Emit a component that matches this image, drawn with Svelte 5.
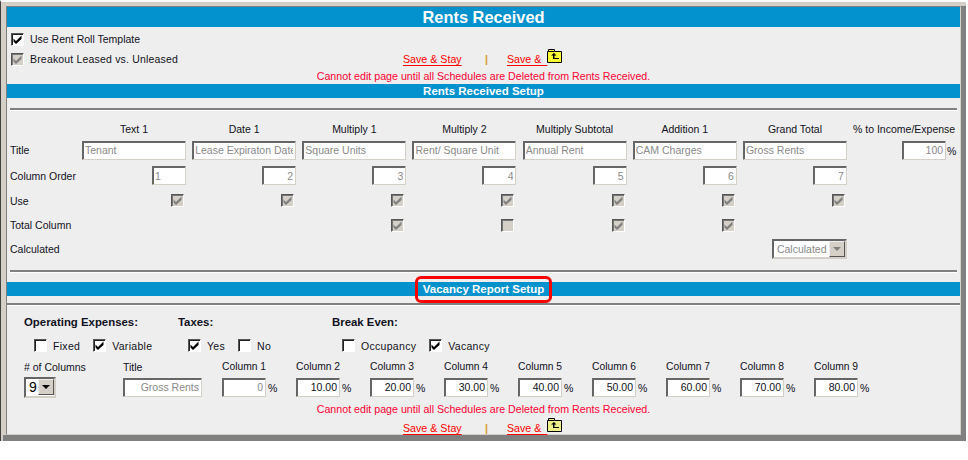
<script>
  const headers = ['Text 1', 'Date 1', 'Multiply 1', 'Multiply 2', 'Multiply Subtotal', 'Addition 1', 'Grand Total'];
  const titles = ['Tenant', 'Lease Expiraton Date', 'Square Units', 'Rent/ Square Unit', 'Annual Rent', 'CAM Charges', 'Gross Rents'];
  const totals = [null, null, true, false, true, true, null];
  const percents = ['10.00', '20.00', '30.00', '40.00', '50.00', '60.00', '70.00', '80.00'];
</script>

{#snippet check(on, disabled = false)}
  <span class="check" class:disabled>
    {#if on}
      <svg viewBox="0 0 9 9" width="9" height="9"><path d="M.5 3.500l2.500 2.500L8.500 .5v3.500L3 9 .5 6.500z" /></svg>
    {/if}
  </span>
{/snippet}

{#snippet folder(pale)}
  <svg class="folder" viewBox="0 0 15 14" width="15" height="14">
    <path d="M.5 13.500v-11h1v-2h6v2h7v11z" fill={pale ? '#eeee88' : '#ffff33'} stroke="#000" />
    <path d="M1 2.500h6" stroke="#000" />
    <path d="M7 4L4 6.500h2V10h6V9H7.500V6.500h2z" fill="#000" />
  </svg>
{/snippet}

{#snippet actions(pale)}
  <a href="#stay" class="stay">Save &amp; Stay</a>
  <span class="sep">|</span>
  <a href="#back" class="back">Save &amp;&nbsp;&nbsp;</a>
  {@render folder(pale)}
{/snippet}

<div class="frame">
  <div class="panel">
    <h1 class="bar title">Rents Received</h1>

    <div class="top-row first">
      <label class="opt">{@render check(true)}Use Rent Roll Template</label>
    </div>
    <div class="top-row">
      <label class="opt loose">{@render check(true, true)}Breakout Leased vs. Unleased</label>
      <div class="actions">{@render actions(false)}</div>
    </div>
    <p class="error">Cannot edit page until all Schedules are Deleted from Rents Received.</p>

    <h2 class="bar">Rents Received Setup</h2>
    <hr class="rule" />

    <div class="setup">
      <span></span>
      {#each headers as h}<span class="head">{h}</span>{/each}
      <span class="head last">% to Income/Expense</span>

      <span class="row-label">Title</span>
      {#each titles as t}<input class="text wide" value={t} disabled />{/each}
      <span class="pct-cell"><input class="text num pct" value="100" disabled /><i>%</i></span>

      <span class="row-label">Column Order</span>
      {#each [1, 2, 3, 4, 5, 6, 7] as n}
        <input class="text order" class:num={n > 1} value={n} disabled />
      {/each}
      <span></span>

      <span class="row-label">Use</span>
      {#each headers as _}<span class="cell">{@render check(true, true)}</span>{/each}
      <span></span>

      <span class="row-label">Total Column</span>
      {#each totals as v}
        <span class="cell">{#if v !== null}{@render check(v, true)}{/if}</span>
      {/each}
      <span></span>

      <span class="row-label">Calculated</span>
      {#each [1, 2, 3, 4, 5, 6] as _}<span></span>{/each}
      <span class="cell calc">
        <span class="select off">Calculated<b class="arrow"><em></em></b></span>
      </span>
      <span></span>
    </div>

    <hr class="rule after" />

    <div class="vacancy-bar">
      <h2 class="bar">Vacancy Report Setup</h2>
      <span class="callout"></span>
    </div>
    <hr class="rule full" />

    <div class="groups">
      <strong>Operating Expenses:</strong>
      <strong>Taxes:</strong>
      <strong>Break Even:</strong>
      <div class="opts">
        <label>{@render check(false)}Fixed</label>
        <label>{@render check(true)}Variable</label>
      </div>
      <div class="opts">
        <label>{@render check(true)}Yes</label>
        <label>{@render check(false)}No</label>
      </div>
      <div class="opts">
        <label>{@render check(false)}Occupancy</label>
        <label>{@render check(true)}Vacancy</label>
      </div>
    </div>

    <div class="columns">
      <span># of Columns</span>
      <span>Title</span>
      <span class="col-label">Column 1</span>
      {#each percents as _, i}<span class="col-label">Column {i + 2}</span>{/each}

      <span class="select nine">9<b class="arrow"><em></em></b></span>
      <input class="text num gross" value="Gross Rents" disabled />
      <span class="pct-cell"><input class="text num col" value="0" disabled /><i>%</i></span>
      {#each percents as p}
        <span class="pct-cell"><input class="text num col live" value={p} /><i>%</i></span>
      {/each}
    </div>

    <p class="error low">Cannot edit page until all Schedules are Deleted from Rents Received.</p>
    <div class="actions bottom">{@render actions(true)}</div>
  </div>
</div>

<style>
  :global(body) {
    margin: 0;
    background: #fff;
  }

  .frame {
    width: 966px;
    height: 441px;
    box-sizing: border-box;
    background: #d4d0c8;
    border-left: 1px solid #404040;
    border-top: 2px solid #fff;
    padding: 4px 0 0 5px;
    position: relative;
    font: 10.5px "Liberation Sans", Arial, sans-serif;
    color: #111122;
  }

  /* bottom shadow band of the window */
  .frame::after {
    content: '';
    position: absolute;
    left: 2px;
    right: 0;
    bottom: 0;
    height: 6px;
    background: #808080;
  }

  .panel {
    width: 955px;
    height: 429px;
    box-sizing: border-box;
    background: #eeeeee;
    border: 1px solid;
    border-color: #808080 #d4d0c8 #d4d0c8 #808080;
    box-shadow: 5px 0 0 #808080;
  }

  .bar {
    margin: 0;
    height: 14px;
    line-height: 14px;
    background: #0392ce;
    color: #fff;
    font-size: 11.5px;
    font-weight: bold;
    text-align: center;
  }

  .title {
    height: 20px;
    line-height: 21px;
    font-size: 16.4px;
  }

  .top-row {
    height: 20px;
    display: grid;
    grid-template-columns: 392px auto;
    align-items: center;
    padding-left: 4px;
  }

  .top-row.first {
    margin-top: 2px;
  }

  .opt {
    display: flex;
    align-items: center;
    gap: 6px;
  }

  .opt.loose {
    letter-spacing: 0.18px;
  }

  .check {
    width: 13px;
    height: 13px;
    box-sizing: border-box;
    flex: none;
    display: inline-flex;
    align-items: center;
    justify-content: center;
    background: #fff;
    border: 1px solid;
    border-color: #555 #fff #fff #555;
    box-shadow: inset 1px 1px 0 #222;
  }

  .check svg {
    fill: #000;
  }

  .check.disabled {
    background: #d4d0c8;
    box-shadow: inset 1px 1px 0 #777;
  }

  .check.disabled svg {
    fill: #808080;
  }

  .actions {
    display: flex;
    align-items: center;
    font-size: 10.67px;
  }

  .actions a {
    color: #f00;
    text-decoration: underline;
    text-underline-offset: 2px;
  }

  .stay {
    width: 82px;
  }

  .sep {
    width: 22px;
    color: #d89a2c;
    font-weight: bold;
  }

  .folder {
    margin: -7px 0 0 0;
  }

  .error {
    margin: 0;
    height: 15px;
    line-height: 15px;
    font-size: 10.67px;
    text-align: center;
    color: #ff0033;
  }

  .rule {
    margin: 10px 3px 0 3px;
    height: 2px;
    border: 0;
    background: #808080;
    box-shadow: 0 1px 0 #fff;
  }

  .rule.after {
    margin-top: 9px;
  }

  .rule.full {
    margin: 7px 0 0 0;
  }

  .setup {
    margin-top: 10px;
    padding-left: 3px;
    display: grid;
    grid-template-columns: 72px repeat(7, 110.17px) 104px;
    grid-template-rows: 17px 26px 25px 25px 24px 24px;
    align-items: center;
  }

  .head {
    width: 104px;
    text-align: center;
    white-space: nowrap;
    display: flex;
    justify-content: center;
  }

  .head.last {
    margin-left: -1px;
  }

  input.text {
    box-sizing: border-box;
    height: 19px;
    padding: 0 2px;
    margin: 0;
    background: #fff;
    border: 1px solid;
    border-color: #666 #d4d0c8 #d4d0c8 #666;
    box-shadow: inset 1px 1px 0 #666;
    font: 10.5px "Liberation Sans", Arial, sans-serif;
    color: #8a8a8a;
    outline: none;
  }

  input.num {
    text-align: right;
  }

  .wide {
    width: 104px;
  }

  .order {
    width: 34px;
    justify-self: start;
    margin-left: 70px !important;
  }

  .cell {
    width: 102px;
    display: flex;
    justify-content: flex-end;
  }

  .calc {
    width: 104px;
  }

  .pct-cell {
    display: flex;
    align-items: center;
    gap: 2px;
  }

  .pct-cell i {
    font-style: normal;
    color: #111122;
    margin-top: 2px;
  }

  .setup .pct-cell {
    padding-left: 49px;
    gap: 1px;
  }

  .pct {
    width: 44px;
  }

  .select {
    display: inline-flex;
    align-items: center;
    justify-content: space-between;
    box-sizing: border-box;
    background: #fff;
    border: 2px solid;
    border-color: #666 #d4d0c8 #d4d0c8 #666;
  }

  .select.off {
    width: 75px;
    height: 20px;
    padding-left: 3px;
    color: #8a8a8a;
  }

  .arrow {
    width: 16px;
    height: 16px;
    flex: none;
    box-sizing: border-box;
    background: #d4d0c8;
    border: 1px solid;
    border-color: #eee #555 #555 #eee;
    display: flex;
    align-items: center;
    justify-content: center;
  }

  .arrow em {
    width: 0;
    height: 0;
    border: 4px solid transparent;
    border-top-color: #000;
    border-bottom: 0;
  }

  .off .arrow em {
    border-top-color: #808080;
  }

  .vacancy-bar {
    position: relative;
    margin-top: 10px;
  }

  .callout {
    position: absolute;
    left: 408px;
    top: -6px;
    width: 137px;
    height: 27px;
    box-sizing: border-box;
    border: 3px solid #f00;
    border-radius: 6px;
  }

  .groups {
    margin-top: 10px;
    padding-left: 17px;
    display: grid;
    grid-template-columns: 154px 154px 154px;
    grid-template-rows: 14px 24px;
    align-items: center;
  }

  .groups strong {
    font-size: 11.4px;
    font-weight: bold;
  }

  .opts {
    display: flex;
    gap: 13px;
    padding-left: 10px;
    margin-top: 9px;
  }

  .opts label {
    display: flex;
    align-items: center;
    gap: 6px;
    letter-spacing: 0.3px;
  }

  .columns {
    margin-top: 6px;
    padding-left: 17px;
    display: grid;
    grid-template-columns: 99px 99px repeat(9, 74px);
    grid-template-rows: 15px 26px;
    align-items: center;
  }

  .col-label {
    font-size: 10.3px;
  }

  .nine {
    width: 32px;
    height: 21px;
    padding-left: 3px;
    font-size: 14px;
    color: #000;
  }

  .gross {
    width: 79px;
  }

  .col {
    width: 44px;
  }

  .col.live {
    color: #111122;
  }

  .low {
    margin-top: 2px;
  }

  .bottom {
    margin-top: 5px;
    padding-left: 396px;
  }
</style>
